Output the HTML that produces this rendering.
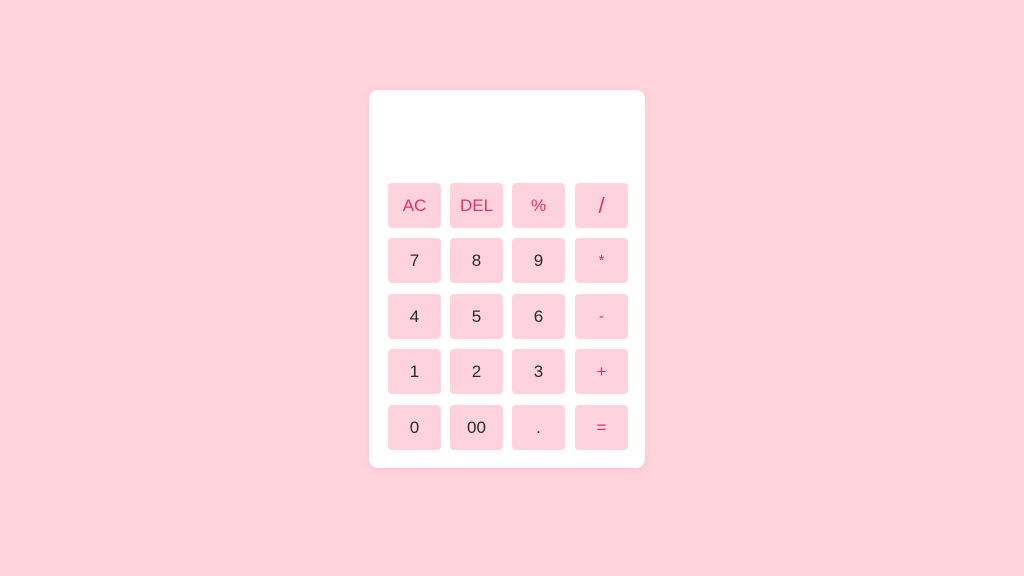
<!DOCTYPE html>
<html><head><style>
html,body{margin:0;width:1024px;height:576px;background:#ffd4dd;overflow:hidden;font-family:"Liberation Sans",sans-serif}
.card{position:absolute;left:369px;top:90px;width:276px;height:378px;background:#fff;border-radius:9px;box-shadow:0 2px 8px rgba(230,150,170,.25)}
.b{position:absolute;width:53px;height:45px;background:#ffd3dd;border-radius:4px;display:flex;align-items:center;justify-content:center;font-size:17px;color:#2a2a2a}
.r{color:#ee2d62}
</style></head><body>
<div class="card"></div>
<div id="g"></div>
<script>
var k=[["AC","DEL","%","/"],["7","8","9","*"],["4","5","6","-"],["1","2","3","+"],["0","00",".","="]];
var xs=[388,450,512,575],ys=[183,238,294,349,405],h="";
for(var r=0;r<5;r++)for(var c=0;c<4;c++){var red=r==0||c==3;var fs=k[r][c]=="/"?"font-size:22px;":(k[r][c]=="*"||k[r][c]=="-")?"font-size:15px;":"";h+='<div class="b'+(red?' r':'')+'" style="'+fs+'left:'+xs[c]+'px;top:'+ys[r]+'px">'+k[r][c]+'</div>';}
document.getElementById('g').innerHTML=h;
</script>
</body></html>
